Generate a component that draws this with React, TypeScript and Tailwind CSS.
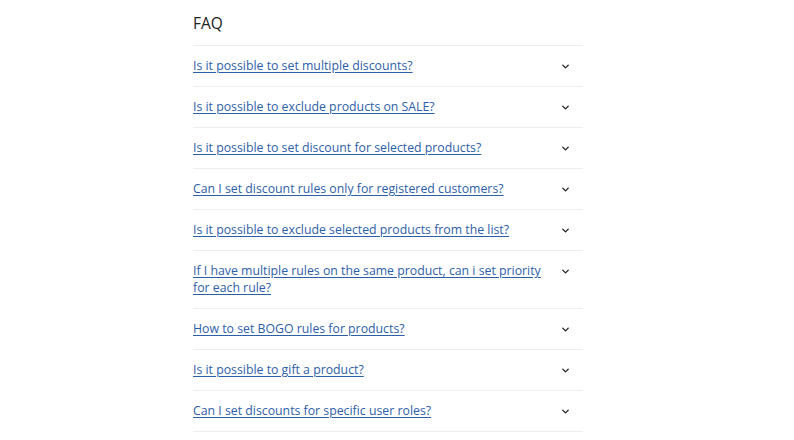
import { ChevronDown } from "lucide-react";

const questions = [
  "Is it possible to set multiple discounts?",
  "Is it possible to exclude products on SALE?",
  "Is it possible to set discount for selected products?",
  "Can I set discount rules only for registered customers?",
  "Is it possible to exclude selected products from the list?",
  "If I have multiple rules on the same product, can i set priority for each rule?",
  "How to set BOGO rules for products?",
  "Is it possible to gift a product?",
  "Can I set discounts for specific user roles?",
];

const App = () => {
  return (
    <div className="min-h-[440px] bg-white font-['Open_Sans',sans-serif] pl-[193px]">
      <div className="w-[390px]">
        <h2 className="pt-[13px] pb-[11px] text-[15.5px] leading-[21px] text-[#222]">FAQ</h2>

        {questions.map((q) => (
          <div key={q} className="flex items-start justify-between border-t border-[#eeeeee] pt-[11px] pb-[12px]">
            <a href="#" className="w-[350px] text-[12.3px] leading-[17px] text-[#2d5ea8] underline underline-offset-2">
              {q}
            </a>
            <ChevronDown className="mr-[12px] mt-[4px] text-[#222]" size={11} strokeWidth={3} />
          </div>
        ))}
        <div className="border-t border-[#eeeeee]" />
      </div>
    </div>
  );
};

export default App;
